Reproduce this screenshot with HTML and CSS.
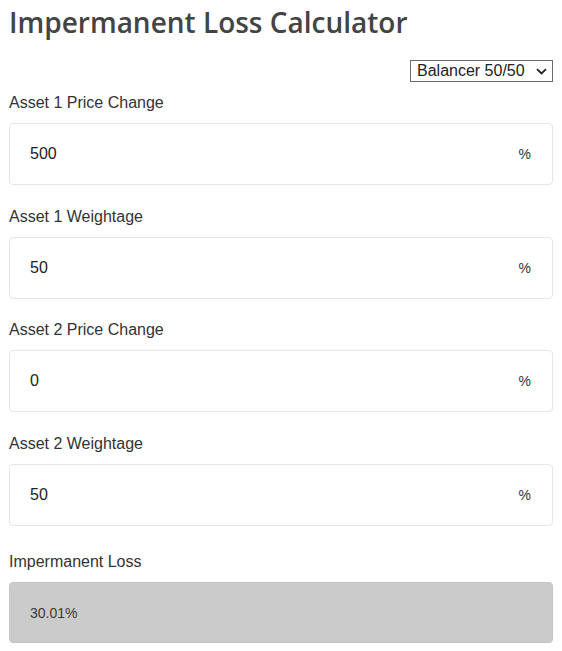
FILE: index.html
```html
<!DOCTYPE html>
<html>
<head>
<meta charset="utf-8">
<link rel="stylesheet" href="styles.css">
</head>
<body>
<div class="page">
  <h1 class="title">Impermanent Loss Calculator</h1>
  <div class="toolbar">
    <span class="select-wrap">
      <select class="pool">
        <option>Balancer 50/50</option>
      </select>
      <svg class="chevron" width="11" height="7" viewBox="0 0 11 7"><path d="M1 1.2 L5.5 5.5 L10 1.2" fill="none" stroke="#222" stroke-width="1.8"/></svg>
    </span>
  </div>
  <div class="group">
    <label class="label">Asset 1 Price Change</label>
    <div class="field"><input class="value" value="500"><span class="unit">%</span></div>
  </div>
  <div class="group">
    <label class="label">Asset 1 Weightage</label>
    <div class="field"><input class="value" value="50"><span class="unit">%</span></div>
  </div>
  <div class="group">
    <label class="label">Asset 2 Price Change</label>
    <div class="field"><input class="value" value="0"><span class="unit">%</span></div>
  </div>
  <div class="group">
    <label class="label">Asset 2 Weightage</label>
    <div class="field"><input class="value" value="50"><span class="unit">%</span></div>
  </div>
  <div class="group group-result">
    <label class="label">Impermanent Loss</label>
    <div class="result">30.01%</div>
  </div>
</div>
</body>
</html>
```

FILE: styles.css
```css
html, body {
  margin: 0;
  padding: 0;
  background: #fff;
}
body {
  font-family: "Liberation Sans", Arial, sans-serif;
  color: #333;
}
.page {
  padding: 0 9px;
  display: flex;
  flex-direction: column;
}
.title {
  font-family: "Open Sans", sans-serif;
  font-weight: 600;
  font-size: 28px;
  color: #444;
  margin: 0;
  padding-top: 3px;
  line-height: 38px;
}
.toolbar {
  display: flex;
  justify-content: flex-end;
  margin-top: 19px;
}
.select-wrap {
  position: relative;
  display: flex;
}
.pool {
  appearance: none;
  -webkit-appearance: none;
  font-family: "Liberation Sans", Arial, sans-serif;
  font-size: 16px;
  line-height: 20px;
  color: #222;
  height: 22px;
  width: 143px;
  border: 1px solid #6b6b6b;
  border-radius: 0;
  background: #fff;
  padding: 0 0 0 6px;
  margin: 0;
}
.chevron {
  position: absolute;
  right: 6px;
  top: 8px;
  pointer-events: none;
}
.group {
  display: flex;
  flex-direction: column;
  gap: 11px;
}
.toolbar + .group {
  margin-top: 11px;
}
.group + .group {
  margin-top: 21.7px;
}
.group + .group-result {
  margin-top: 26px;
}
.label {
  font-size: 16px;
  line-height: 19px;
  color: #333;
}
.field {
  display: flex;
  align-items: center;
  height: 60px;
  border: 1px solid #e6e6e6;
  border-radius: 4px;
  padding: 0 21px 0 20px;
}
.value {
  flex: 1;
  border: none;
  outline: none;
  font-family: "Liberation Sans", Arial, sans-serif;
  font-size: 16px;
  color: #222;
  padding: 0;
  background: transparent;
  min-width: 0;
}
.unit {
  font-size: 14px;
  color: #333;
}
.result {
  display: flex;
  align-items: center;
  height: 59px;
  background: #cbcbcb;
  border: 1px solid #c4c4c4;
  border-radius: 4px;
  padding: 0 20px;
  font-size: 14px;
  color: #3a3a3a;
}
```
